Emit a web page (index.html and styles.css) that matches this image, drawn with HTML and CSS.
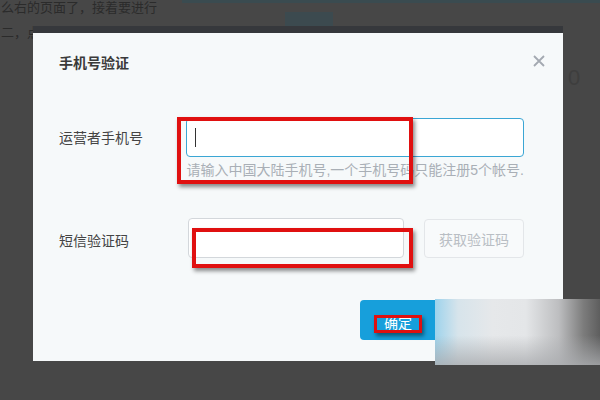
FILE: index.html
```html
<!DOCTYPE html>
<html lang="zh-CN">
<head>
    <meta charset="UTF-8">
    <title>手机号验证</title>
    <link rel="stylesheet" href="styles.css">
</head>
<body>
    <!-- page behind the overlay -->
    <div class="backdrop">
        <div class="bg-left">
            <p class="bg-line first">么右的页面了，接着要进行</p>
            <p class="bg-line">二，点击</p>
        </div>
        <div class="bg-right">
            <div class="bg-strip"></div>
            <div class="bg-tile"></div>
            <div class="bg-num">0</div>
        </div>
    </div>

    <!-- verify dialog -->
    <div class="modal">
        <div class="modal-head">
            <h3>手机号验证</h3>
            <span class="close">
                <svg width="12" height="12" viewBox="0 0 12 12"><path d="M1 1 L11 11 M11 1 L1 11" stroke="#a3a9b1" stroke-width="1.8" fill="none"/></svg>
            </span>
        </div>

        <div class="form-row">
            <label class="label">运营者手机号</label>
            <div class="field">
                <div class="input active"><span class="caret"></span></div>
                <p class="hint">请输入中国大陆手机号,一个手机号码只能注册5个帐号.</p>
            </div>
        </div>

        <div class="form-row code-row">
            <label class="label">短信验证码</label>
            <div class="field inline">
                <div class="input short"></div>
                <button class="btn-code">获取验证码</button>
            </div>
        </div>

        <div class="modal-foot">
            <button class="btn-ok">确定</button>
        </div>
    </div>

    <!-- annotation marks -->
    <div class="mark mark-phone"></div>
    <div class="mark mark-code"></div>
    <div class="mark mark-ok"></div>
    <div class="smear"></div>
</body>
</html>
```

FILE: styles.css
```css
/* General reset */
* {
    margin: 0;
    padding: 0;
    box-sizing: border-box;
}

body {
    width: 600px;
    height: 400px;
    overflow: hidden;
    position: relative;
    font-family: "Liberation Sans", "Noto Sans CJK SC", sans-serif;
    background-color: #474747;
    color: #333333;
}

/* background page */
.backdrop {
    display: flex;
    height: 100%;
}

.bg-left {
    width: 182px;
}

.bg-line {
    font-size: 13px;
    line-height: 16px;
    color: #2b2b2b;
    padding-left: 1px;
    white-space: nowrap;
}

.bg-line.first {
    margin-top: 0;
    margin-bottom: 9px;
}

.bg-right {
    flex: 1;
    position: relative;
}

.bg-strip {
    height: 3px;
    background-color: #3a4b50;
}

.bg-tile {
    width: 48px;
    height: 21px;
    margin: 9px 0 0 103px;
    background-color: #3c4a4f;
}

.bg-num {
    font-size: 22px;
    color: #3e3e3e;
    margin: 32px 0 0 386px;
}

/* dialog */
.modal {
    position: absolute;
    left: 33px;
    top: 26px;
    width: 530px;
    height: 335px;
    background-color: #f6f9fa;
    border-top: 7px solid #36383c;
    padding: 0 39px 0 26px;
}

.modal-head {
    display: flex;
    align-items: center;
    justify-content: space-between;
    height: 60px;
}

.modal-head h3 {
    font-size: 14px;
    font-weight: bold;
    color: #3a3a3a;
    line-height: 20px;
}

.close {
    display: flex;
    margin-right: -21px;
    margin-top: -4px;
}

.form-row {
    display: flex;
    align-items: flex-start;
    margin-top: 25px;
}

.label {
    width: 128px;
    font-size: 14px;
    line-height: 40px;
    color: #444444;
}

.field {
    flex: 1;
}

.input {
    height: 39px;
    border: 1px solid #d3d7db;
    border-radius: 4px;
    background-color: #ffffff;
    padding: 9px 0 0 8px;
}

.input.active {
    border-color: #3ba6d4;
}

.caret {
    display: block;
    width: 1px;
    height: 19px;
    background-color: #333333;
}

.hint {
    font-size: 14px;
    line-height: 24px;
    color: #a9afb6;
    white-space: nowrap;
    margin-top: 1px;
}

.code-row {
    margin-top: 36px;
}

.code-row .label {
    padding-top: 3px;
}

.field.inline {
    display: flex;
    gap: 20px;
}

.input.short {
    width: 216px;
    height: 40px;
    margin-left: 1px;
}

.btn-code {
    flex: 1;
    height: 39px;
    margin-top: 1px;
    border: 1px solid #e3e6e9;
    border-radius: 4px;
    background-color: #f8fafb;
    color: #b9bec4;
    font-family: inherit;
    font-size: 14px;
}

.modal-foot {
    display: flex;
    margin-top: 39px;
    padding-left: 301px;
}

.btn-ok {
    width: 80px;
    height: 40px;
    border: none;
    border-radius: 4px;
    background-color: #179fdb;
    color: #ffffff;
    font-family: inherit;
    font-size: 14px;
    text-align: left;
    padding: 4px 0 0 24px;
}

/* red annotation boxes drawn over the screenshot */
.mark {
    position: absolute;
    border: 4px solid #e01010;
    box-shadow: 2px 3px 4px rgba(0, 0, 0, 0.45);
}

.mark-phone {
    left: 177px;
    top: 117px;
    width: 236px;
    height: 67px;
}

.mark-code {
    left: 192px;
    top: 228px;
    width: 221px;
    height: 40px;
}

.mark-ok {
    left: 374px;
    top: 315px;
    width: 48px;
    height: 18px;
    border-width: 3px;
}

/* blurred patch over the cancel button */
.smear {
    position: absolute;
    left: 435px;
    top: 299px;
    width: 165px;
    height: 66px;
    background:
        linear-gradient(to bottom, rgba(190, 192, 195, 0) 55%, rgba(170, 172, 175, 0.8) 100%),
        linear-gradient(to right, #9ed3ec 0%, #d7e4eb 14%, #e6e8ea 35%, #e4e6e8 55%, #bdbec0 75%, #7c7c7c 90%, #5e5e5e 100%);
}
```
